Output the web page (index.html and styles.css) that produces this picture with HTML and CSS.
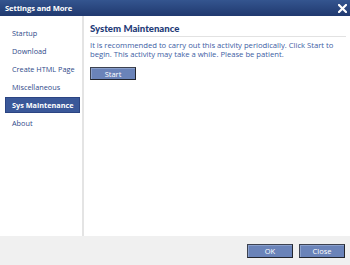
FILE: index.html
```html
<!DOCTYPE html>
<html>
<head>
<meta charset="utf-8">
<link rel="stylesheet" href="styles.css">
</head>
<body>
<div class="window">
  <div class="titlebar">
    <span class="title">Settings and More</span>
    <svg class="close" width="9" height="9" viewBox="0 0 9 9"><path d="M1 1 L8 8 M8 1 L1 8" stroke="#fff" stroke-width="2.2" stroke-linecap="square"/></svg>
  </div>
  <div class="main">
    <nav class="sidebar">
      <div class="item">Startup</div>
      <div class="item">Download</div>
      <div class="item">Create HTML Page</div>
      <div class="item">Miscellaneous</div>
      <div class="item active">Sys Maintenance</div>
      <div class="item">About</div>
    </nav>
    <section class="content">
      <h1 class="heading">System Maintenance</h1>
      <p class="desc">It is recommended to carry out this activity periodically. Click Start to begin. This activity may take a while. Please be patient.</p>
      <button class="btn start">Start</button>
    </section>
  </div>
  <div class="footer">
    <button class="btn">OK</button>
    <button class="btn">Close</button>
  </div>
</div>
</body>
</html>
```
FILE: styles.css
```css
* { box-sizing: border-box; }
html, body { margin: 0; padding: 0; }
body {
  width: 350px;
  height: 265px;
  overflow: hidden;
  font-family: "Open Sans", "DejaVu Sans", sans-serif;
  background: #fff;
}
.window {
  display: flex;
  flex-direction: column;
  width: 350px;
  height: 265px;
}
.titlebar {
  height: 16px;
  flex: none;
  background: linear-gradient(#34558f, #20396f);
  display: flex;
  align-items: center;
  justify-content: space-between;
  padding: 0 3px 0 5px;
}
.title {
  color: #fff;
  font-weight: bold;
  font-size: 7.6px;
  letter-spacing: -0.1px;
}
.close { display: block; }
.main {
  flex: 1;
  display: flex;
  min-height: 0;
}
.sidebar {
  width: 84px;
  flex: none;
  border-right: 2px solid #e4e4e4;
  padding: 9px 5px 0 5px;
  display: flex;
  flex-direction: column;
  gap: 2px;
}
.item {
  height: 16px;
  line-height: 16px;
  font-size: 7.3px;
  color: #2f4a8a;
  padding-left: 7px;
  white-space: nowrap;
}
.item.active {
  background: #3a5899;
  border: 1px solid #2b4482;
  color: #fff;
  font-weight: bold;
  padding-left: 6px;
  line-height: 14px;
  width: 75px;
}
.content {
  flex: 1;
  padding: 6px 4px 0 6px;
}
.heading {
  margin: 0;
  font-family: "Lato", "Open Sans", sans-serif;
  font-size: 9.6px;
  font-weight: 900;
  color: #1f3b78;
  line-height: 13px;
  padding-bottom: 1px;
  border-bottom: 1px solid #e2e2e2;
}
.desc {
  margin: 4px 0 0 0;
  font-size: 7.7px;
  line-height: 9px;
  color: #3d5ea4;
  letter-spacing: -0.02px;
}
.btn {
  font-family: inherit;
  font-size: 7.5px;
  color: #fff;
  background: #6a83b9;
  border: 1px solid #3d4250;
  border-right-color: #23262e;
  border-bottom-color: #23262e;
  box-shadow: inset 1px 1px 0 #8aa0cc;
  height: 14px;
  width: 46px;
  padding: 0;
  line-height: 12px;
}
.start {
  margin-top: 8px;
  display: block;
  height: 13px;
}
.footer {
  height: 29px;
  flex: none;
  background: #f0f0f0;
  display: flex;
  justify-content: flex-end;
  align-items: center;
  gap: 6px;
  padding: 0 5px 0 0;
}
```
